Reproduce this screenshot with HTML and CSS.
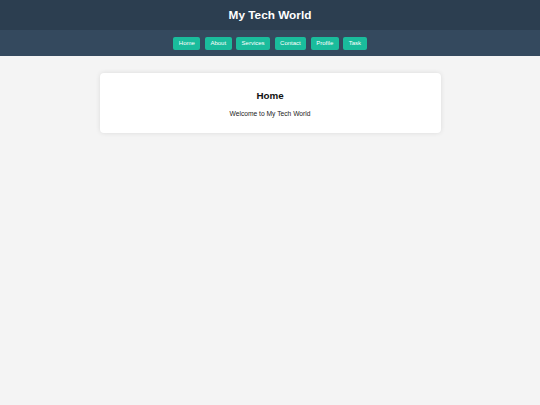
FILE: index.html
```html
<!DOCTYPE html>
<html lang="en">
<head>
<meta charset="utf-8">
<title>My Tech World</title>
<link rel="stylesheet" href="styles.css">
</head>
<body>
<header class="site-header">
  <h1 class="site-title">My Tech World</h1>
</header>
<nav class="site-nav">
  <a class="nav-btn" href="#">Home</a>
  <a class="nav-btn" href="#">About</a>
  <a class="nav-btn" href="#">Services</a>
  <a class="nav-btn" href="#">Contact</a>
  <a class="nav-btn" href="#">Profile</a>
  <a class="nav-btn" href="#">Task</a>
</nav>
<main class="content">
  <section class="card">
    <h2 class="card-title">Home</h2>
    <p class="card-text">Welcome to My Tech World</p>
  </section>
</main>
</body>
</html>
```
FILE: styles.css
```css
html, body {
  margin: 0;
  padding: 0;
}
body {
  background: #f4f4f4;
  font-family: "Liberation Sans", Arial, sans-serif;
  color: #222;
  min-height: 405px;
}
.site-header {
  background: #2c3e50;
  height: 30px;
  display: flex;
  align-items: center;
  justify-content: center;
}
.site-title {
  margin: 0;
  color: #ffffff;
  font-size: 11.8px;
  font-weight: bold;
  line-height: 14px;
}
.site-nav {
  background: #34495e;
  height: 26px;
  display: flex;
  align-items: center;
  justify-content: center;
  gap: 4.5px;
}
.nav-btn {
  display: block;
  background: #1abc9c;
  color: #ffffff;
  text-decoration: none;
  font-size: 6px;
  height: 13px;
  line-height: 13px;
  padding: 0 5.5px;
  border-radius: 2px;
}
.content {
  padding-top: 17px;
}
.card {
  width: 341px;
  height: 59.5px;
  box-sizing: border-box;
  margin: 0 auto;
  background: #ffffff;
  border-radius: 4px;
  box-shadow: 0 0 5px rgba(0, 0, 0, 0.1);
  padding: 17px 10px 0;
  text-align: center;
}
.card-title {
  margin: 0;
  font-size: 9.8px;
  line-height: 12px;
  font-weight: bold;
  color: #111;
}
.card-text {
  margin: 8px 0 0;
  font-size: 6.7px;
  line-height: 8px;
  color: #222;
}
```
